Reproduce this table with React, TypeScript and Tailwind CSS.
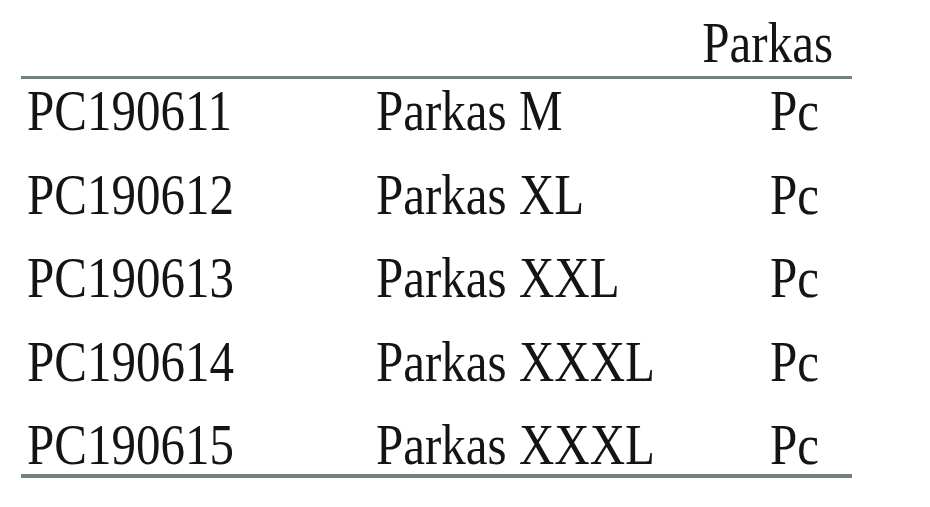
const rows = [
  { code: "PC190611", name: "Parkas M", unit: "Pc" },
  { code: "PC190612", name: "Parkas XL", unit: "Pc" },
  { code: "PC190613", name: "Parkas XXL", unit: "Pc" },
  { code: "PC190614", name: "Parkas XXXL", unit: "Pc" },
  { code: "PC190615", name: "Parkas XXXL", unit: "Pc" },
];

const Cell = ({ children }: { children: string }) => (
  <span className="inline-block scale-y-[1.17] whitespace-nowrap">{children}</span>
);

export default function App() {
  return (
    <div className="w-[930px] h-[507px] bg-white overflow-hidden font-['Liberation_Serif','Times_New_Roman',serif] text-[49px] leading-[48px] text-[#141414]">
      <div className="ml-[21px] w-[831px]">
        <div className="h-[76px] flex items-end justify-end pr-[19px] pb-[9px]">
          <Cell>Parkas</Cell>
        </div>
        <div className="border-t-[3px] border-b-[4px] border-[#6f8181] pt-[8px] pb-[5px] flex flex-col gap-[35.5px]">
          {rows.map((row, index) => (
            <div key={index} className="grid grid-cols-[355px_394px_1fr] h-[48px]">
              <div className="pl-[6px]">
                <Cell>{row.code}</Cell>
              </div>
              <div>
                <Cell>{row.name}</Cell>
              </div>
              <div>
                <Cell>{row.unit}</Cell>
              </div>
            </div>
          ))}
        </div>
      </div>
    </div>
  );
}
